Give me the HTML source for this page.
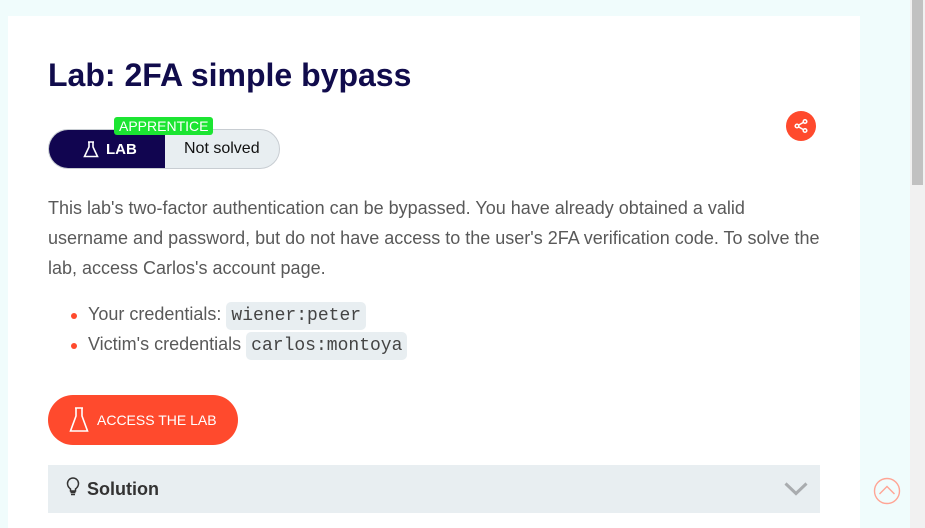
<!DOCTYPE html>
<html><head><meta charset="utf-8"><style>
*{margin:0;padding:0;box-sizing:border-box}
html,body{width:925px;height:528px;overflow:hidden}
body{background:#f0fcfc;font-family:"Liberation Sans",sans-serif;position:relative}
.card{position:absolute;left:8px;top:16px;width:852px;height:512px;background:#fff}
h1{position:absolute;left:48px;top:57px;font-size:32px;font-weight:bold;color:#110c4c;white-space:nowrap}
.pill{position:absolute;left:48px;top:129px;width:232px;height:40px;border-radius:20px;border:1px solid #c8cdd2;background:#e8eef1;overflow:hidden}
.pill .lab{position:absolute;left:0;top:0;width:116px;height:40px;background:#110550;color:#fff;font-weight:bold;font-size:15px}
.pill .lab span{position:absolute;left:57px;top:11px}
.pill .ns{position:absolute;left:135px;top:10px;font-size:16px;color:#111}
.app{position:absolute;left:114px;top:117px;background:#1ce532;color:#fff;font-size:14px;padding:1px 5px;border-radius:3px;line-height:16px}
.share{position:absolute;left:786px;top:111px;width:30px;height:30px;border-radius:50%;background:#ff4a2d}
p{position:absolute;left:48px;top:193px;width:778px;font-size:18px;line-height:30px;color:#595959}
ul{position:absolute;left:70px;top:299px;list-style:none;font-size:18px;color:#595959}
li{position:relative;height:30px;line-height:30px;padding-left:18px}
li:before{content:"";position:absolute;left:1px;top:14px;width:6px;height:6px;border-radius:50%;background:#ff4a2d}
code{font-family:"Liberation Mono",monospace;background:#e8eef1;border-radius:5px;padding:4px 5px;color:#444;font-size:18px}
.btn{position:absolute;left:48px;top:395px;width:190px;height:50px;border-radius:25px;background:#ff4a2d;color:#fff;font-size:14px}
.btn span{position:absolute;left:49px;top:17px}
.sol{position:absolute;left:48px;top:465px;width:772px;height:48px;background:#e8eef1}
.sol b{position:absolute;left:39px;top:14px;font-size:18px;color:#333}
.sb{position:absolute;left:910px;top:0;width:15px;height:528px;background:#f1f1f1}
.sb div{position:absolute;left:2px;top:0;width:11px;height:185px;background:#c1c1c1}
</style></head><body>
<div class="card"></div>
<h1>Lab: 2FA simple bypass</h1>
<div class="pill"><div class="lab"><svg style="position:absolute;left:34px;top:11px" width="16" height="17" viewBox="0 0 16 17" fill="none" stroke="#fff" stroke-width="1.6"><path d="M5 1h6M6 1v5L1.5 15.5h13L10 6V1"/></svg><span>LAB</span></div><div class="ns">Not solved</div></div>
<div class="app">APPRENTICE</div>
<div class="share"><svg width="30" height="30" viewBox="0 0 30 30" fill="none" stroke="#fff" stroke-width="1.5"><circle cx="19" cy="10.5" r="1.8"/><circle cx="11" cy="15" r="1.8"/><circle cx="19" cy="19.5" r="1.8"/><path d="M12.6 14.1l4.8-2.7M12.6 15.9l4.8 2.7"/></svg></div>
<p>This lab's two-factor authentication can be bypassed. You have already obtained a valid<br>username and password, but do not have access to the user's 2FA verification code. To solve the<br>lab, access Carlos's account page.</p>
<ul><li>Your credentials: <code>wiener:peter</code></li><li>Victim's credentials <code>carlos:montoya</code></li></ul>
<div class="btn"><svg style="position:absolute;left:21px;top:12px" width="20" height="26" viewBox="0 0 20 26" fill="none" stroke="#fff" stroke-width="1.6"><path d="M6 1h8M7 1v8L1.5 24h17L13 9V1"/></svg><span>ACCESS THE LAB</span></div>
<div class="sol"><svg style="position:absolute;left:18px;top:12px" width="14" height="19" viewBox="0 0 14 19" fill="none" stroke="#333" stroke-width="1.5"><path d="M4.5 12C2 10 1.5 8 1.5 6.5a5.5 5.5 0 0111 0c0 1.5-.5 3.5-3 5.5v2h-5zM4.5 15.5h5M5 17.5h4"/></svg><b>Solution</b><svg style="position:absolute;left:736px;top:17px" width="24" height="14" viewBox="0 0 24 14" fill="none" stroke="#a9acaf" stroke-width="3"><path d="M1.5 1.5l10.5 10 10.5-10"/></svg></div>
<svg style="position:absolute;left:873px;top:477px" width="28" height="28" viewBox="0 0 28 28" fill="none" stroke="#ffa595" stroke-width="1.4"><circle cx="14" cy="14" r="12.5"/><path d="M6.5 17l7.5-7.5 7.5 7.5"/></svg>
<div class="sb"><div></div></div>
</body></html>
